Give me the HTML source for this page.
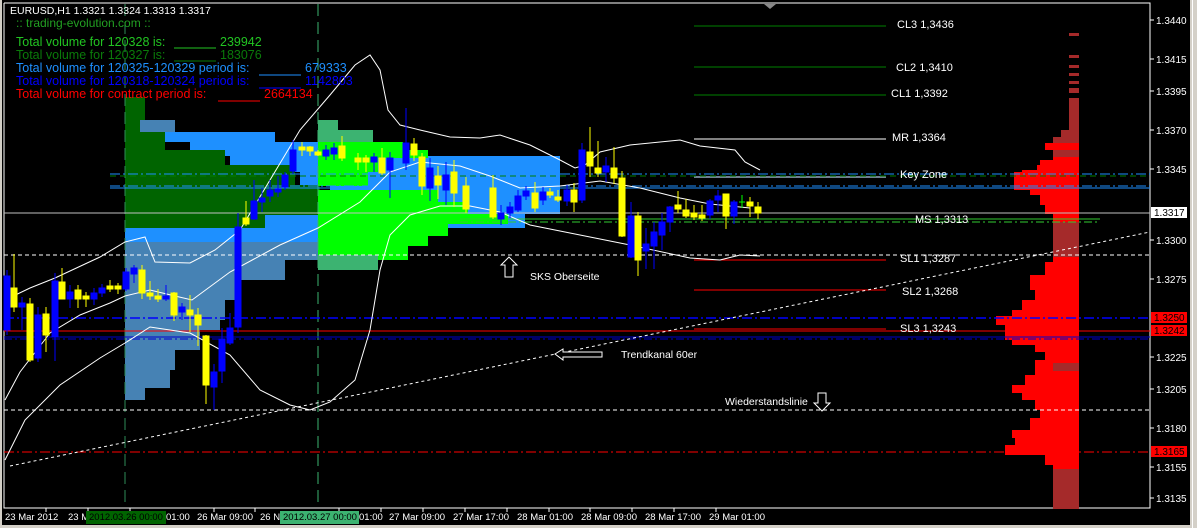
<!DOCTYPE html>
<html><head><meta charset="utf-8"><style>
html,body{margin:0;padding:0;background:#000;width:1197px;height:528px;overflow:hidden}
svg{display:block}
text{font-family:"Liberation Sans",Arial,sans-serif}
</style></head><body>
<svg width="1197" height="528" viewBox="0 0 1197 528" xmlns="http://www.w3.org/2000/svg">
<rect width="1197" height="528" fill="#000"/>
<rect x="1190" y="0" width="7" height="528" fill="#d4d0c8"/>
<rect x="1192" y="0" width="1" height="528" fill="#fff"/>
<rect x="0" y="0" width="2" height="528" fill="#d4d0c8"/>
<rect x="0" y="525" width="1190" height="3" fill="#d4d0c8"/>
<polyline points="4,3 1150,3 1150,508 4,508 4,3" fill="none" stroke="#fff" stroke-width="1"/>
<polygon points="764,4 776,4 770,9" fill="#888"/>

<!-- light blue -->
<g fill="#1e90ff">
<rect x="165" y="132" width="110" height="10"/>
<rect x="190" y="142" width="180" height="14"/>
<rect x="230" y="156" width="330" height="16"/>
<rect x="300" y="172" width="260" height="14"/>
<rect x="330" y="186" width="230" height="14"/>
<rect x="230" y="200" width="330" height="14"/>
<rect x="125" y="214" width="400" height="14"/>
<rect x="125" y="228" width="320" height="8"/>
<rect x="125" y="236" width="210" height="6"/>
</g>
<!-- steel blue -->
<g fill="#4682b4">
<rect x="125" y="242" width="200" height="18"/>
<rect x="125" y="260" width="160" height="20"/>
<rect x="125" y="280" width="115" height="20"/>
<rect x="125" y="300" width="100" height="20"/>
<rect x="125" y="320" width="95" height="10"/>
<rect x="125" y="330" width="75" height="20"/>
<rect x="125" y="350" width="50" height="20"/>
<rect x="125" y="370" width="45" height="18"/>
<rect x="125" y="388" width="20" height="12"/>
<rect x="140" y="120" width="35" height="12"/>
</g>
<!-- dark green -->
<g fill="#006400">
<rect x="125" y="97" width="20" height="23"/>
<rect x="125" y="120" width="15" height="12"/>
<rect x="125" y="132" width="40" height="18"/>
<rect x="125" y="150" width="100" height="15"/>
<rect x="125" y="165" width="170" height="20"/>
<rect x="125" y="185" width="195" height="30"/>
<rect x="125" y="215" width="140" height="13"/>
</g>
<!-- green profile -->
<g fill="#3cb371">
<rect x="318" y="120" width="20" height="10"/>
<rect x="318" y="130" width="55" height="12"/>
<rect x="318" y="255" width="60" height="15"/>
</g>
<g fill="#00ff00">
<rect x="318" y="142" width="85" height="8"/>
<rect x="318" y="150" width="110" height="8"/>
<rect x="318" y="158" width="60" height="14"/>
<rect x="318" y="172" width="50" height="14"/>
<rect x="318" y="190" width="120" height="12"/>
<rect x="318" y="202" width="150" height="12"/>
<rect x="318" y="214" width="190" height="10"/>
<rect x="318" y="224" width="130" height="12"/>
<rect x="318" y="236" width="110" height="10"/>
<rect x="318" y="246" width="90" height="9"/>
<rect x="378" y="255" width="30" height="5"/>
</g>

<!-- right red volume profile -->
<g fill="#a52a2a">
<rect x="1069" y="33" width="10" height="3"/>
<rect x="1069" y="55" width="10" height="3"/>
<rect x="1069" y="65" width="10" height="3"/>
<rect x="1069" y="73" width="10" height="3"/>
<rect x="1069" y="81" width="10" height="3"/>
<rect x="1069" y="88" width="10" height="5"/>
<rect x="1069" y="98" width="10" height="32"/>
<rect x="1061" y="130" width="18" height="7"/>
<rect x="1053" y="137" width="26" height="6"/>
<rect x="1053" y="150" width="26" height="7"/>
<rect x="1053" y="222" width="26" height="35"/>
<rect x="1053" y="363" width="26" height="8"/>
<rect x="1053" y="469" width="26" height="40"/>
</g>
<polygon fill="#ff0000" points="1045,143 1079,143 1079,150 1045,150 1045,143"/>
<polygon fill="#ff0000" points="1053,157 1079,157 1079,222 1053,222 1053,214 1045,214 1045,205 1040,205 1040,195 1030,195 1030,190 1014,190 1014,172 1022,172 1022,170 1037,170 1037,165 1040,165 1040,160 1053,160"/>
<polygon fill="#ff0000" points="1053,257 1079,257 1079,363 1053,363 1053,371 1079,371 1079,469 1053,469 1053,465 1045,465 1045,455 1005,455 1005,445 1015,445 1015,438 1012,438 1012,430 1030,430 1030,418 1040,418 1040,410 1035,410 1035,400 1022,400 1022,393 1012,393 1012,385 1025,385 1025,375 1035,375 1035,360 1045,360 1045,352 1035,352 1035,345 1012,345 1012,340 1005,340 1005,325 996,325 996,316 1012,316 1012,310 1022,310 1022,300 1035,300 1035,290 1030,290 1030,275 1045,275 1045,262 1053,262"/>

<line x1="125" y1="4" x2="125" y2="508" stroke="#2e8b57" stroke-dasharray="12,6"/>
<line x1="318" y1="4" x2="318" y2="508" stroke="#3cb371" stroke-dasharray="12,6"/>

<g stroke-width="1">
<line x1="694" y1="26" x2="886" y2="26" stroke="#008000"/>
<line x1="694" y1="67" x2="886" y2="67" stroke="#008000"/>
<line x1="694" y1="95" x2="886" y2="95" stroke="#008000"/>
<line x1="694" y1="139" x2="886" y2="139" stroke="#fff"/>
<line x1="110" y1="174" x2="1150" y2="174" stroke="#1e90ff" stroke-dasharray="10,3,2,3"/>
<line x1="694" y1="177" x2="886" y2="177" stroke="#708090" stroke-width="2"/>
<line x1="110" y1="176" x2="1150" y2="176" stroke="#008000" stroke-dasharray="6,4"/>
<line x1="110" y1="186" x2="1150" y2="186" stroke="#1e90ff" stroke-dasharray="10,3,2,3"/>
<line x1="110" y1="188" x2="1150" y2="188" stroke="#1e90ff"/>
<line x1="4" y1="213" x2="1150" y2="213" stroke="#c0c0c0"/>
<line x1="460" y1="219" x2="1100" y2="219" stroke="#32cd32"/>
<line x1="460" y1="222" x2="1100" y2="222" stroke="#32cd32" stroke-dasharray="8,3,2,3"/>
<line x1="4" y1="255" x2="1150" y2="255" stroke="#fff" stroke-dasharray="4,3"/>
<line x1="694" y1="260" x2="886" y2="260" stroke="#ff0000"/>
<line x1="694" y1="290" x2="886" y2="290" stroke="#ff0000"/>
<line x1="4" y1="318" x2="1150" y2="318" stroke="#0000ff" stroke-dasharray="10,3,2,3" stroke-width="1.5"/>
<line x1="694" y1="329" x2="886" y2="329" stroke="#ff0000"/>
<line x1="4" y1="331" x2="1150" y2="331" stroke="#ff0000"/>
<line x1="4" y1="337" x2="1150" y2="337" stroke="#0000cd"/>
<line x1="4" y1="339" x2="1150" y2="339" stroke="#0000cd" stroke-dasharray="8,3,2,3"/>
<line x1="4" y1="410" x2="1150" y2="410" stroke="#fff" stroke-dasharray="4,3"/>
<line x1="4" y1="452" x2="1150" y2="452" stroke="#ff0000" stroke-dasharray="10,3,2,3"/>
</g>
<line x1="10" y1="466" x2="1150" y2="232" stroke="#fff" stroke-dasharray="3,3"/>

<g fill="none" stroke="#fff" stroke-width="1">
<polyline points="5,300 30,288 55,278 100,257 125,242 145,237 155,262 190,263 215,250 240,230 270,180 300,130 330,95 355,65 370,55 380,70 388,110 400,125 420,130 450,137 480,138 500,135 530,145 560,160 575,168 585,165 600,152 630,145 680,140 700,146 735,150 745,162 760,170"/>
<polyline points="5,400 20,372 50,333 80,315 110,303 125,296 150,290 175,296 192,300 230,272 280,245 318,228 360,202 390,172 420,162 460,166 490,176 520,188 560,186 600,181 640,188 680,198 710,204 750,208"/>
<polyline points="5,460 25,420 60,385 100,358 125,343 150,327 190,333 230,355 260,390 290,405 310,410 330,402 355,380 370,330 380,270 390,235 410,215 440,206 470,206 500,212 530,225 570,233 630,245 690,258 720,260 740,255 760,256"/>
</g>

<g stroke-width="1">
<g stroke="#ffff00" fill="#ffff00">
<line x1="14" y1="254" x2="14" y2="312"/><rect x="11" y="288" width="6" height="19"/>
<line x1="30" y1="298" x2="30" y2="362"/><rect x="27" y="304" width="6" height="56"/>
<line x1="46" y1="307" x2="46" y2="352"/><rect x="43" y="314" width="6" height="21"/>
<line x1="62" y1="268" x2="62" y2="299"/><rect x="59" y="282" width="6" height="17"/>
<line x1="78" y1="285" x2="78" y2="308"/><rect x="75" y="290" width="6" height="9"/>
<line x1="86" y1="292" x2="86" y2="307"/><rect x="83" y="296" width="6" height="3"/>
<line x1="110" y1="280" x2="110" y2="292"/><rect x="107" y="286" width="6" height="3"/>
<line x1="118" y1="283" x2="118" y2="294"/><rect x="115" y="286" width="6" height="3"/>
<line x1="142" y1="265" x2="142" y2="299"/><rect x="139" y="270" width="6" height="23"/>
<line x1="150" y1="281" x2="150" y2="300"/><rect x="147" y="293" width="6" height="3"/>
<line x1="158" y1="289" x2="158" y2="302"/><rect x="155" y="296" width="6" height="3"/>
<line x1="174" y1="292" x2="174" y2="321"/><rect x="171" y="293" width="6" height="22"/>
<line x1="190" y1="295" x2="190" y2="332"/><rect x="187" y="310" width="6" height="5"/>
<line x1="198" y1="308" x2="198" y2="346"/><rect x="195" y="315" width="6" height="10"/>
<line x1="206" y1="335" x2="206" y2="404"/><rect x="203" y="336" width="6" height="49"/>
<line x1="246" y1="201" x2="246" y2="226"/><rect x="243" y="218" width="6" height="6"/>
<line x1="302" y1="142" x2="302" y2="156"/><rect x="299" y="147" width="6" height="3"/>
<line x1="310" y1="146" x2="310" y2="156"/><rect x="307" y="147" width="6" height="4"/>
<line x1="318" y1="150" x2="318" y2="156"/><rect x="315" y="152" width="6" height="3"/>
<line x1="342" y1="136" x2="342" y2="161"/><rect x="339" y="146" width="6" height="12"/>
<line x1="358" y1="153" x2="358" y2="170"/><rect x="355" y="158" width="6" height="4"/>
<line x1="366" y1="155" x2="366" y2="172"/><rect x="363" y="158" width="6" height="4"/>
<line x1="382" y1="148" x2="382" y2="175"/><rect x="379" y="158" width="6" height="15"/>
<line x1="414" y1="138" x2="414" y2="161"/><rect x="411" y="144" width="6" height="11"/>
<line x1="422" y1="153" x2="422" y2="195"/><rect x="419" y="157" width="6" height="29"/>
<line x1="438" y1="166" x2="438" y2="199"/><rect x="435" y="176" width="6" height="9"/>
<line x1="454" y1="160" x2="454" y2="207"/><rect x="451" y="172" width="6" height="21"/>
<line x1="466" y1="177" x2="466" y2="213"/><rect x="463" y="186" width="6" height="23"/>
<line x1="493" y1="175" x2="493" y2="219"/><rect x="490" y="188" width="6" height="29"/>
<line x1="535" y1="182" x2="535" y2="212"/><rect x="532" y="193" width="6" height="15"/>
<line x1="550" y1="188" x2="550" y2="198"/><rect x="547" y="192" width="6" height="3"/>
<line x1="558" y1="190" x2="558" y2="202"/><rect x="555" y="197" width="6" height="3"/>
<line x1="574" y1="183" x2="574" y2="212"/><rect x="571" y="190" width="6" height="12"/>
<line x1="590" y1="127" x2="590" y2="177"/><rect x="587" y="152" width="6" height="14"/>
<line x1="598" y1="141" x2="598" y2="177"/><rect x="595" y="168" width="6" height="5"/>
<line x1="614" y1="147" x2="614" y2="184"/><rect x="611" y="168" width="6" height="10"/>
<line x1="622" y1="171" x2="622" y2="237"/><rect x="619" y="178" width="6" height="58"/>
<line x1="638" y1="212" x2="638" y2="276"/><rect x="635" y="216" width="6" height="44"/>
<line x1="678" y1="191" x2="678" y2="213"/><rect x="675" y="205" width="6" height="4"/>
<line x1="686" y1="199" x2="686" y2="218"/><rect x="683" y="210" width="6" height="6"/>
<line x1="694" y1="205" x2="694" y2="220"/><rect x="691" y="213" width="6" height="4"/>
<line x1="702" y1="205" x2="702" y2="221"/><rect x="699" y="215" width="6" height="3"/>
<line x1="726" y1="194" x2="726" y2="229"/><rect x="723" y="194" width="6" height="22"/>
<line x1="750" y1="197" x2="750" y2="217"/><rect x="747" y="202" width="6" height="4"/>
<line x1="758" y1="202" x2="758" y2="219"/><rect x="755" y="207" width="6" height="6"/>
</g>
<g stroke="#0000ff" fill="#0000ff">
<line x1="7" y1="270" x2="7" y2="335"/><rect x="4" y="276" width="6" height="54"/>
<line x1="22" y1="297" x2="22" y2="330"/><rect x="19" y="303" width="6" height="4"/>
<line x1="38" y1="307" x2="38" y2="362"/><rect x="35" y="315" width="6" height="43"/>
<line x1="55" y1="273" x2="55" y2="361"/><rect x="52" y="281" width="6" height="56"/>
<line x1="70" y1="285" x2="70" y2="308"/><rect x="67" y="292" width="6" height="7"/>
<line x1="94" y1="288" x2="94" y2="305"/><rect x="91" y="293" width="6" height="6"/>
<line x1="102" y1="284" x2="102" y2="297"/><rect x="99" y="288" width="6" height="5"/>
<line x1="126" y1="268" x2="126" y2="291"/><rect x="123" y="272" width="6" height="17"/>
<line x1="134" y1="265" x2="134" y2="283"/><rect x="131" y="268" width="6" height="6"/>
<line x1="166" y1="285" x2="166" y2="301"/><rect x="163" y="296" width="6" height="3"/>
<line x1="182" y1="303" x2="182" y2="320"/><rect x="179" y="307" width="6" height="5"/>
<line x1="214" y1="364" x2="214" y2="410"/><rect x="211" y="372" width="6" height="15"/>
<line x1="222" y1="328" x2="222" y2="383"/><rect x="219" y="339" width="6" height="32"/>
<line x1="230" y1="313" x2="230" y2="345"/><rect x="227" y="328" width="6" height="15"/>
<line x1="238" y1="213" x2="238" y2="333"/><rect x="235" y="227" width="6" height="100"/>
<line x1="254" y1="180" x2="254" y2="220"/><rect x="251" y="201" width="6" height="18"/>
<line x1="262" y1="188" x2="262" y2="212"/><rect x="259" y="198" width="6" height="4"/>
<line x1="270" y1="180" x2="270" y2="202"/><rect x="267" y="190" width="6" height="6"/>
<line x1="278" y1="176" x2="278" y2="197"/><rect x="275" y="189" width="6" height="3"/>
<line x1="285" y1="172" x2="285" y2="190"/><rect x="282" y="175" width="6" height="12"/>
<line x1="293" y1="140" x2="293" y2="174"/><rect x="290" y="150" width="6" height="21"/>
<line x1="326" y1="145" x2="326" y2="160"/><rect x="323" y="150" width="6" height="6"/>
<line x1="334" y1="143" x2="334" y2="160"/><rect x="331" y="148" width="6" height="6"/>
<line x1="374" y1="153" x2="374" y2="172"/><rect x="371" y="157" width="6" height="5"/>
<line x1="390" y1="152" x2="390" y2="198"/><rect x="387" y="158" width="6" height="12"/>
<line x1="406" y1="108" x2="406" y2="170"/><rect x="403" y="143" width="6" height="20"/>
<line x1="430" y1="158" x2="430" y2="201"/><rect x="427" y="168" width="6" height="20"/>
<line x1="446" y1="162" x2="446" y2="205"/><rect x="443" y="175" width="6" height="15"/>
<line x1="501" y1="205" x2="501" y2="225"/><rect x="498" y="213" width="6" height="6"/>
<line x1="510" y1="202" x2="510" y2="218"/><rect x="507" y="207" width="6" height="6"/>
<line x1="518" y1="190" x2="518" y2="212"/><rect x="515" y="196" width="6" height="14"/>
<line x1="526" y1="186" x2="526" y2="200"/><rect x="523" y="191" width="6" height="5"/>
<line x1="543" y1="187" x2="543" y2="205"/><rect x="540" y="192" width="6" height="8"/>
<line x1="567" y1="185" x2="567" y2="206"/><rect x="564" y="190" width="6" height="11"/>
<line x1="582" y1="143" x2="582" y2="203"/><rect x="579" y="150" width="6" height="50"/>
<line x1="606" y1="157" x2="606" y2="182"/><rect x="603" y="166" width="6" height="6"/>
<line x1="631" y1="202" x2="631" y2="258"/><rect x="628" y="216" width="6" height="41"/>
<line x1="646" y1="228" x2="646" y2="269"/><rect x="643" y="244" width="6" height="7"/>
<line x1="654" y1="222" x2="654" y2="269"/><rect x="651" y="232" width="6" height="14"/>
<line x1="662" y1="213" x2="662" y2="250"/><rect x="659" y="222" width="6" height="13"/>
<line x1="670" y1="206" x2="670" y2="232"/><rect x="667" y="207" width="6" height="15"/>
<line x1="710" y1="199" x2="710" y2="219"/><rect x="707" y="201" width="6" height="14"/>
<line x1="718" y1="190" x2="718" y2="212"/><rect x="715" y="196" width="6" height="4"/>
<line x1="734" y1="200" x2="734" y2="224"/><rect x="731" y="202" width="6" height="14"/>
</g>
<line x1="742" y1="195" x2="742" y2="208" stroke="#00ff00"/><line x1="739" y1="202" x2="745" y2="202" stroke="#00ff00"/>
</g>

<polygon points="509,257 517,265 513,265 513,277 505,277 505,265 501,265" fill="#000" stroke="#fff"/>
<polygon points="555,354 563,349 563,352 602,352 602,357 563,357 563,360" fill="#000" stroke="#fff"/>
<polygon points="822,411 830,403 826,403 826,393 818,393 818,403 814,403" fill="#000" stroke="#fff"/>

<g fill="#fff" font-size="11">
<text x="897" y="28">CL3 1,3436</text>
<text x="896" y="71">CL2 1,3410</text>
<text x="891" y="97">CL1 1,3392</text>
<text x="892" y="141">MR 1,3364</text>
<text x="900" y="178">Key Zone</text>
<text x="915" y="223">MS 1,3313</text>
<text x="900" y="262">SL1 1,3287</text>
<text x="902" y="295">SL2 1,3268</text>
<text x="900" y="332">SL3 1,3243</text>
<text x="530" y="280" font-size="10.5">SKS Oberseite</text>
<text x="621" y="358" font-size="10.5">Trendkanal 60er</text>
<text x="725" y="405" font-size="10.5">Wiederstandslinie</text>
</g>

<text x="10" y="14" fill="#fff" font-size="10.5">EURUSD,H1  1.3321 1.3324 1.3313 1.3317</text>
<text x="16" y="27" fill="#22a022" font-size="12">:: trading-evolution.com ::</text>
<g font-size="12.5">
<text x="16" y="46" fill="#22c422">Total volume for 120328 is: </text>
<line x1="174" y1="48" x2="216" y2="48" stroke="#22c422"/>
<text x="220" y="46" fill="#22c422">239942</text>
<text x="16" y="59" fill="#0a7a0a">Total volume for 120327 is: </text>
<line x1="174" y1="61" x2="216" y2="61" stroke="#0a7a0a"/>
<text x="220" y="59" fill="#0a7a0a">183076</text>
<text x="16" y="72" fill="#1e90ff">Total volume for 120325-120329 period is: </text>
<line x1="259" y1="75" x2="301" y2="75" stroke="#1e90ff"/>
<text x="305" y="72" fill="#1e90ff">679333</text>
<text x="16" y="85" fill="#0000ff">Total volume for 120318-120324 period is: </text>
<line x1="259" y1="88" x2="301" y2="88" stroke="#0000ff"/>
<text x="305" y="85" fill="#0000ff">1142803</text>
<text x="16" y="98" fill="#ff0000">Total volume for contract period is: </text>
<line x1="218" y1="101" x2="260" y2="101" stroke="#ff0000"/>
<text x="264" y="98" fill="#ff0000">2664134</text>
</g>

<g stroke="#fff"><line x1="1150" y1="20" x2="1154" y2="20"/><line x1="1150" y1="59" x2="1154" y2="59"/><line x1="1150" y1="91" x2="1154" y2="91"/><line x1="1150" y1="130" x2="1154" y2="130"/><line x1="1150" y1="169" x2="1154" y2="169"/><line x1="1150" y1="240" x2="1154" y2="240"/><line x1="1150" y1="279" x2="1154" y2="279"/><line x1="1150" y1="357" x2="1154" y2="357"/><line x1="1150" y1="389" x2="1154" y2="389"/><line x1="1150" y1="428" x2="1154" y2="428"/><line x1="1150" y1="467" x2="1154" y2="467"/><line x1="1150" y1="498" x2="1154" y2="498"/></g>
<g fill="#fff" font-size="10">
<text x="1156" y="24">1.3440</text><text x="1156" y="63">1.3415</text><text x="1156" y="95">1.3395</text>
<text x="1156" y="134">1.3370</text><text x="1156" y="173">1.3345</text><text x="1156" y="244">1.3300</text>
<text x="1156" y="283">1.3275</text><text x="1156" y="361">1.3225</text><text x="1156" y="393">1.3205</text>
<text x="1156" y="432">1.3180</text><text x="1156" y="471">1.3155</text><text x="1156" y="502">1.3135</text>
</g>
<rect x="1151" y="207" width="36" height="11" fill="#fff"/>
<text x="1154" y="216" fill="#000" font-size="10">1.3317</text>
<rect x="1151" y="312" width="36" height="11" fill="#ff0000"/>
<text x="1154" y="321" fill="#000" font-size="10">1.3250</text>
<rect x="1151" y="325" width="36" height="11" fill="#ff0000"/>
<text x="1154" y="334" fill="#000" font-size="10">1.3242</text>
<rect x="1151" y="446" width="36" height="11" fill="#ff0000"/>
<text x="1154" y="455" fill="#000" font-size="10">1.3165</text>

<g stroke="#fff"><line x1="46" y1="508" x2="46" y2="512"/><line x1="88" y1="508" x2="88" y2="512"/><line x1="130" y1="508" x2="130" y2="512"/><line x1="214" y1="508" x2="214" y2="512"/><line x1="255" y1="508" x2="255" y2="512"/><line x1="339" y1="508" x2="339" y2="512"/><line x1="381" y1="508" x2="381" y2="512"/><line x1="423" y1="508" x2="423" y2="512"/><line x1="465" y1="508" x2="465" y2="512"/><line x1="507" y1="508" x2="507" y2="512"/><line x1="549" y1="508" x2="549" y2="512"/><line x1="590" y1="508" x2="590" y2="512"/><line x1="632" y1="508" x2="632" y2="512"/><line x1="674" y1="508" x2="674" y2="512"/><line x1="716" y1="508" x2="716" y2="512"/></g>
<g fill="#fff" font-size="9.5">
<text x="5" y="520">23 Mar 2012</text>
<text x="68" y="520">23 M</text>
<text x="166" y="520">01:00</text>
<text x="197" y="520">26 Mar 09:00</text>
<text x="260" y="520">26 N</text>
<text x="359" y="520">01:00</text>
<text x="389" y="520">27 Mar 09:00</text>
<text x="453" y="520">27 Mar 17:00</text>
<text x="517" y="520">28 Mar 01:00</text>
<text x="581" y="520">28 Mar 09:00</text>
<text x="645" y="520">28 Mar 17:00</text>
<text x="709" y="520">29 Mar 01:00</text>
</g>
<rect x="86" y="511" width="80" height="13" fill="#006400"/>
<text x="89" y="520" fill="#000" font-size="9.5">2012.03.26 00:00</text>
<rect x="280" y="511" width="79" height="13" fill="#3cb371"/>
<text x="283" y="520" fill="#000" font-size="9.5">2012.03.27 00:00</text>
</svg>
</body></html>
